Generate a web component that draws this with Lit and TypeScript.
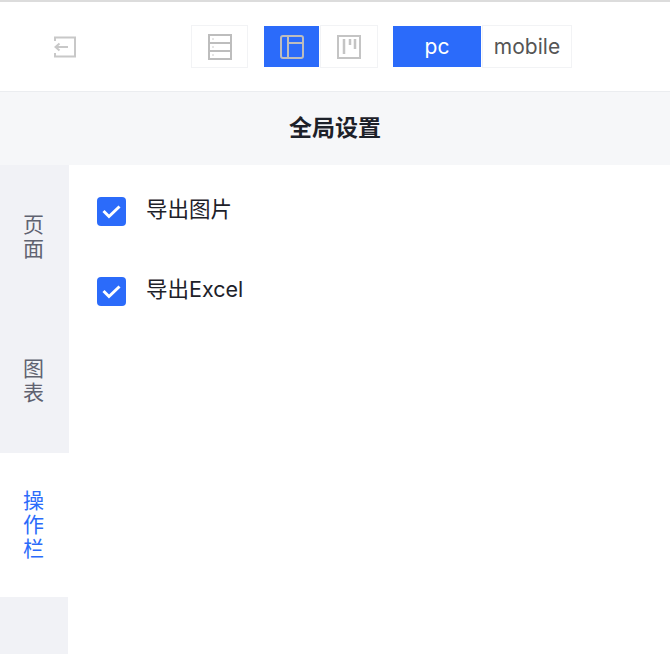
import { LitElement, html, svg, css } from "lit";
import { customElement, state } from "lit/decorators.js";

const tabs = ["页面", "图表", "操作栏"];
const options = ["导出图片", "导出Excel"];

@customElement("app-root")
export class AppRoot extends LitElement {
  static styles = css`
    :host {
      display: block;
      width: 670px;
      height: 654px;
      overflow: hidden;
      background: #fff;
      font-family: Inter, "Noto Sans CJK SC", sans-serif;
    }
    .page {
      display: flex;
      flex-direction: column;
      height: 100%;
      border-top: 2px solid #dcdcdc;
      box-sizing: border-box;
    }
    .toolbar {
      display: flex;
      align-items: center;
      height: 90px;
      flex: none;
      box-sizing: border-box;
      padding: 0 0 0 54px;
      border-bottom: 1px solid #ebedf0;
    }
    .back {
      display: block;
      width: 22px;
      height: 22px;
      margin-right: 115px;
    }
    .group {
      display: flex;
      margin-right: 14px;
    }
    .group.first {
      margin-right: 15px;
    }
    .btn {
      display: flex;
      align-items: center;
      justify-content: center;
      box-sizing: border-box;
      height: 43px;
      border: 1px solid #f2f3f5;
      background: #fff;
      color: #555;
      font-size: 21px;
    }
    .btn.on {
      background: #2b6bfa;
      border: 1px solid #fff;
      color: #fff;
    }
    .icon-btn {
      width: 57px;
    }
    .icon-btn + .icon-btn {
      width: 58px;
    }
    .btn.pc {
      width: 90px;
    }
    .btn.mobile {
      width: 90px;
    }
    .title {
      flex: none;
      height: 73px;
      box-sizing: border-box;
      padding-bottom: 5px;
      display: flex;
      align-items: center;
      justify-content: center;
      background: #f6f7f9;
      color: #1d2129;
      font-size: 23px;
      font-weight: 700;
    }
    .body {
      flex: 1;
      display: flex;
      min-height: 0;
    }
    .side {
      width: 69px;
      flex: none;
      display: flex;
      flex-direction: column;
    }
    .tab {
      height: 144px;
      flex: none;
      display: flex;
      align-items: center;
      justify-content: center;
      background: #f1f2f6;
      color: #5f6270;
      font-size: 21px;
      line-height: 24px;
      text-align: center;
    }
    .tab span {
      width: 21px;
      margin: 0 2px 1px 0;
    }
    .tab.active {
      background: #fff;
      color: #2b6bfa;
    }
    .rest {
      flex: 1;
      width: 68px;
      background: #f1f2f6;
    }
    .content {
      flex: 1;
      padding: 17px 0 0 28px;
    }
    .row {
      display: flex;
      align-items: center;
      gap: 20px;
      height: 58px;
      margin-bottom: 22px;
      color: #1d2129;
      font-size: 21.500px;
    }
    .label {
      line-height: 26px;
      margin-bottom: 5px;
    }
    .check {
      width: 29px;
      height: 29px;
      flex: none;
      display: flex;
      align-items: center;
      justify-content: center;
      border-radius: 4px;
      background: #2b6bfa;
    }
  `;

  @state() active = 2;

  render() {
    return html`
      <div class="page">
        <div class="toolbar">
          <svg class="back" viewBox="0 0 22 22" fill="none" stroke="#c8c8c8" stroke-width="2">
            <path d="M1 5V1.500H21V20.500H1V17" />
            <path d="M1 11H14M5.500 7.500L1.500 11L5.500 14.500" />
          </svg>
          <div class="group first">
            <div class="btn icon-btn">
              <svg width="24" height="26" viewBox="0 0 24 26" fill="none" stroke="#bdbdbd" stroke-width="2">
                ${svg`<rect x="1" y="1" width="22" height="24" /><path d="M1 9H23M1 17H23" /><path d="M4 5H6M4 13H6M4 21H6" stroke-width="1" stroke="#ccc" />`}
              </svg>
            </div>
          </div>
          <div class="group">
            <div class="btn icon-btn on">
              <svg width="24" height="24" viewBox="0 0 24 24" fill="none" stroke="#bdbdbd" stroke-width="2">
                ${svg`<rect x="1" y="1" width="22" height="22" rx="2" /><path d="M8 8H23M8 1V23" />`}
              </svg>
            </div>
            <div class="btn icon-btn">
              <svg width="24" height="24" viewBox="0 0 24 24" fill="none" stroke="#c4c4c4" stroke-width="2">
                ${svg`<rect x="1" y="1" width="22" height="22" /><path d="M7 4V19M13 4V10M18 4V14" stroke-width="2.500" />`}
              </svg>
            </div>
          </div>
          <div class="group">
            <div class="btn pc on">pc</div>
            <div class="btn mobile">mobile</div>
          </div>
        </div>
        <div class="title">全局设置</div>
        <div class="body">
          <div class="side">
            ${tabs.map(
              (t, i) => html`<div class="tab ${i === this.active ? "active" : ""}"><span>${t}</span></div>`
            )}
            <div class="rest"></div>
          </div>
          <div class="content">
            ${options.map(
              (o) => html`<div class="row">
                <div class="check">
                  <svg width="19" height="15" viewBox="0 0 19 15" fill="none" stroke="#fff" stroke-width="3">
                    <path d="M1.500 7L7 12.500L17.500 2.500" />
                  </svg>
                </div>
                <span class="label">${o}</span>
              </div>`
            )}
          </div>
        </div>
      </div>
    `;
  }
}
